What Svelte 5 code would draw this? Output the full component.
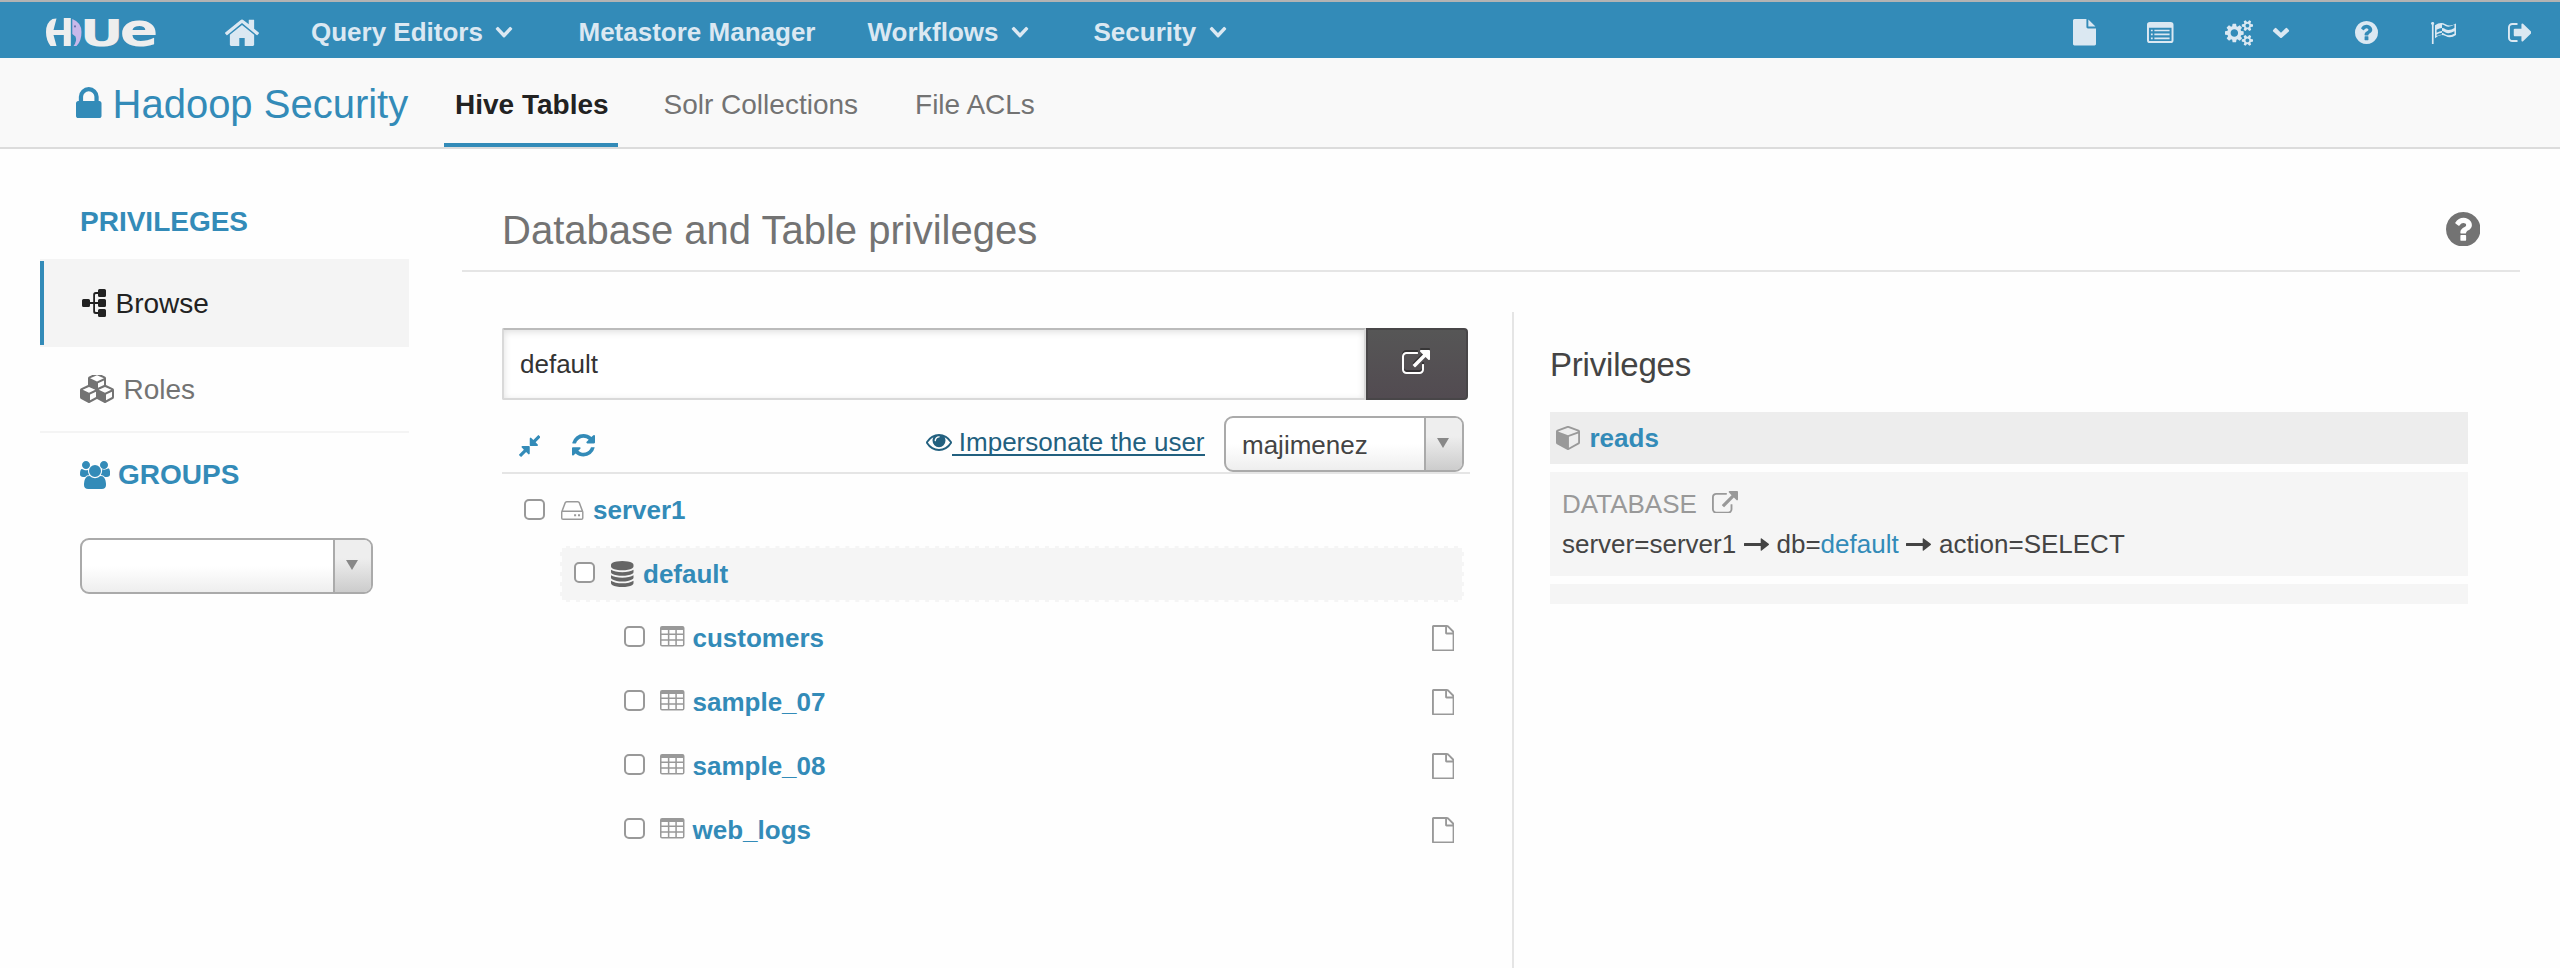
<script>
  const P = {
    home: { vb: '89 224 1614 1312', d: 'M1472 992v480q0 26-19 45t-45 19h-384v-384h-256v384h-384q-26 0-45-19t-19-45v-480q0-1 .5-3t.5-3l575-474 575 474q1 2 1 6zm223-69l-62 74q-8 9-21 11h-3q-13 0-21-7l-692-577-692 577q-12 8-24 7-13-2-21-11l-62-74q-8-10-7-23.5t11-21.5l719-599q32-26 76-26t76 26l244 204v-195q0-14 9-23t23-9h192q14 0 23 9t9 23v408l219 182q10 8 11 21.5t-7 23.5z' },
    file: { vb: '128 0 1536 1792', d: 'M1152 512v-472q22 14 36 28l408 408q14 14 28 36h-472zm-128 32q0 40 28 68t68 28h544v1056q0 40-28 68t-68 28h-1344q-40 0-68-28t-28-68v-1600q0-40 28-68t68-28h800v544z' },
    fileO: { vb: '128 0 1536 1792', d: 'M1596 380q28 28 48 76t20 88v1152q0 40-28 68t-68 28h-1344q-40 0-68-28t-28-68v-1600q0-40 28-68t68-28h896q40 0 88 20t76 48zm-444-244v376h376q-10-29-22-41l-313-313q-12-12-41-22zm384 1528v-1024h-416q-40 0-68-28t-28-68v-416h-768v1536h1280z' },
    listAlt: { vb: '0 0 27 22', d: 'M3 0h21a3 3 0 0 1 3 3v16a3 3 0 0 1-3 3H3a3 3 0 0 1-3-3V3a3 3 0 0 1 3-3zM2 6v13a1 1 0 0 0 1 1h21a1 1 0 0 0 1-1V6zM4 8h1.8v1.8H4zM4 12.1h1.8v1.8H4zM4 16.2h1.8V18H4zM7.5 8H23v1.8H7.5zM7.5 12.1H23v1.8H7.5zM7.5 16.2H23V18H7.5z' },
    cogs: { vb: '0 0 1920 1792', d: 'M896 896q0-106-75-181t-181-75-181 75-75 181 75 181 181 75 181-75 75-181zm768 512q0-52-38-90t-90-38-90 38-38 90q0 53 37.5 90.5t90.5 37.5 90.5-37.5 37.5-90.5zm0-1024q0-52-38-90t-90-38-90 38-38 90q0 53 37.5 90.5t90.5 37.5 90.5-37.5 37.5-90.5zm-384 421v185q0 10-7 19.5t-16 10.5l-155 24q-11 35-32 76 34 48 90 115 7 11 7 20 0 12-7 19-23 30-82.5 89.5t-78.5 59.5q-11 0-21-7l-115-90q-37 19-77 31-11 108-23 155-7 24-30 24h-186q-11 0-20-7.5t-10-17.5l-23-153q-34-10-75-31l-118 89q-7 7-20 7-11 0-21-8-144-133-144-160 0-9 7-19 10-14 41-53t47-61q-23-44-35-82l-152-24q-10-1-17-9.5t-7-19.5v-185q0-10 7-19.5t16-10.5l155-24q11-35 32-76-34-48-90-115-7-11-7-20 0-12 7-20 22-30 82-89t79-59q11 0 21 7l115 90q34-18 77-32 11-108 23-154 7-24 30-24h186q11 0 20 7.5t10 17.5l23 153q34 10 75 31l118-89q8-7 20-7 11 0 21 8 144 133 144 160 0 8-7 19-12 16-42 54t-45 60q23 48 34 82l152 23q10 2 17 10.5t7 19.5zm640 533v140q0 16-149 31-12 27-30 52 51 113 51 138 0 4-4 7-122 71-124 71-8 0-46-47t-52-68q-20 2-30 2t-30-2q-14 21-52 68t-46 47q-2 0-124-71-4-3-4-7 0-25 51-138-18-25-30-52-149-15-149-31v-140q0-16 149-31 13-29 30-52-51-113-51-138 0-4 4-7 4-2 35-20t59-34 30-16q8 0 46 46.5t52 67.5q20-2 30-2t30 2q51-71 92-112l6-2q4 0 124 70 4 3 4 7 0 25-51 138 17 23 30 52 149 15 149 31zm0-1024v140q0 16-149 31-12 27-30 52 51 113 51 138 0 4-4 7-122 71-124 71-8 0-46-47t-52-68q-20 2-30 2t-30-2q-14 21-52 68t-46 47q-2 0-124-71-4-3-4-7 0-25 51-138-18-25-30-52-149-15-149-31v-140q0-16 149-31 13-29 30-52-51-113-51-138 0-4 4-7 4-2 35-20t59-34 30-16q8 0 46 46.5t52 67.5q20-2 30-2t30 2q51-71 92-112l6-2q4 0 124 70 4 3 4 7 0 25-51 138 17 23 30 52 149 15 149 31z' },
    chevron: { vb: '0 0 18 11', d: 'M1.2 2.9L2.8 1.2Q3.6.5 4.4 1.2L9 5.8l4.6-4.6q.8-.7 1.6 0l1.6 1.7q.7.8 0 1.6l-7 6.2q-.8.6-1.6 0L1.2 4.5q-.7-.8 0-1.6z' },
    chevronThin: { vb: '0 0 18 14', d: 'M1 2.4L2 1.3Q2.8.6 3.6 1.3L9 7.9l5.4-6.6q.8-.7 1.6 0l1 1.1q.6.8 0 1.6l-7.2 8.6q-.8.8-1.6 0L1 4q-.6-.8 0-1.6z' },
    question: { vb: '128 128 1536 1536', d: 'M1024 1376v-192q0-14-9-23t-23-9h-192q-14 0-23 9t-9 23v192q0 14 9 23t23 9h192q14 0 23-9t9-23zm256-672q0-88-55.5-163t-138.5-116-170-41q-243 0-371 213-15 24 8 42l132 100q7 6 19 6 16 0 25-12 53-68 86-92 34-24 86-24 48 0 85.5 26t37.5 59q0 38-20 61t-68 45q-63 28-115.5 86.5t-52.5 125.5v36q0 14 9 23t23 9h192q14 0 23-9t9-23q0-19 21.5-49.5t54.5-49.5q32-18 49-28.5t46-35 44.5-48 28-60.5 12.5-81zm384 192q0 209-103 385.5t-279.5 279.5-385.5 103-385.5-103-279.5-279.5-103-385.5 103-385.5 279.5-279.5 385.5-103 385.5 103 279.5 279.5 103 385.5z' },
    flag: { vb: '0 0 25 22', d: 'M0 1.6a1.6 1.6 0 1 1 2.6 1.2V22H.9V2.8A1.6 1.6 0 0 1 0 1.6zM4 3.2Q9.5-.6 14.5 2.2T25 1.4V13Q19.5 17 14.5 14T4 16.2zM5.6 7.7Q8.5 6 11 6V9.1Q8.5 9.1 5.6 10.8zM5.6 14.1V12.4Q8.5 10.7 11 10.7V12.4Q8.5 12.4 5.6 14.1zM11 2.5Q13 2.7 14.5 4 16 4.8 17.5 4.7V8Q16 8.1 14.5 7.3 13 6 11 6zM11 9.1Q13 9.3 14.5 10.5 16 11.4 17.5 11.3V13.3Q16 13.5 14.5 12.5 13 11.4 11 10.7zM17.5 4.7Q20.5 4.3 23.4 2.8V5.9Q20.5 7.6 17.5 8zM17.5 11.3Q20.5 11 23.4 9.3V11.8Q20.5 13.3 17.5 13.3z' },
    signOut: { vb: '64 256 1568 1280', d: 'M704 1440q0 4 1 20t.5 26.5-3 23.5-10 19.5-20.5 6.5h-320q-119 0-203.5-84.5t-84.5-203.5v-704q0-119 84.5-203.5t203.5-84.5h320q13 0 22.5 9.5t9.5 22.5q0 4 1 20t.5 26.5-3 23.5-10 19.5-20.5 6.5h-320q-66 0-113 47t-47 113v704q0 66 47 113t113 47h312l11.5 1 11.5 3 8 5.5 7 9 2 13.5zm928-544q0 26-19 45l-544 544q-19 19-45 19t-45-19-19-45v-288h-448q-26 0-45-19t-19-45v-384q0-26 19-45t45-19h448v-288q0-26 19-45t45-19 45 19l544 544q19 19 19 45z' },
    lock: { vb: '320 128 1152 1408', d: 'M640 768h512v-192q0-106-75-181t-181-75-181 75-75 181v192zm832 96v576q0 40-28 68t-68 28h-960q-40 0-68-28t-28-68v-576q0-40 28-68t68-28h32v-192q0-184 132-316t316-132 316 132 132 316v192h32q40 0 68 28t28 68z' },
    sitemap: { vb: '0 0 24 28', d: 'M1.5 10h5A1.5 1.5 0 0 1 8 11.5V13h3.2V5.5Q11.2 3 13.7 3H16V1.5A1.5 1.5 0 0 1 17.5 0h5A1.5 1.5 0 0 1 24 1.5v5A1.5 1.5 0 0 1 22.5 8h-5A1.5 1.5 0 0 1 16 6.5V5h-2q-1 0-1 1v7h3v-1.5a1.5 1.5 0 0 1 1.5-1.5h5a1.5 1.5 0 0 1 1.5 1.5v5a1.5 1.5 0 0 1-1.5 1.5h-5a1.5 1.5 0 0 1-1.5-1.5V15h-3v7q0 1 1 1h2v-1.5a1.5 1.5 0 0 1 1.5-1.5h5a1.5 1.5 0 0 1 1.5 1.5v5a1.5 1.5 0 0 1-1.5 1.5h-5a1.5 1.5 0 0 1-1.5-1.5V25h-2.3q-2.500 0-2.500-2.500V15H8v1.500A1.500 1.500 0 0 1 6.500 18h-5A1.500 1.500 0 0 1 0 16.500v-5A1.500 1.500 0 0 1 1.500 10z' },
    cubes: { vb: '0 118 2176 1674', d: 'M640 1632l384-192v-314l-384 164v342zm-64-454l404-173-404-173-404 173zm1088 454l384-192v-314l-384 164v342zm-64-454l404-173-404-173-404 173zm-448-293l384-165v-266l-384 164v267zm-64-379l441-189-441-189-441 189zm1088 518v416q0 36-19 67t-52 47l-448 224q-25 14-57 14t-57-14l-448-224q-4-2-7-4-2 2-7 4l-448 224q-25 14-57 14t-57-14l-448-224q-33-16-52-47t-19-67v-416q0-38 21.5-70t56.5-48l434-186v-400q0-38 21.5-70t56.5-48l448-192q23-10 50-10t50 10l448 192q35 16 56.5 48t21.5 70v400l434 186q36 16 57 48t21 70z' },
    users: { vb: '0 0 1920 1792', d: 'M593 896q-162 5-265 128h-134q-82 0-138-40.5t-56-118.5q0-353 124-353 6 0 43.5 21t97.5 42.5 119 21.5q67 0 133-23-5 37-5 66 0 159 91 298zm1071 637q0 120-73 189.5t-194 69.5h-874q-121 0-194-69.5t-73-189.5q0-53 3.5-103.5t14-109 26.5-108.5 43-97.5 62-81 85.5-53.5 111.5-20q10 0 43 21.5t73 48 107 48 135 21.5 135-21.5 107-48 73-48 43-21.5q61 0 111.5 20t85.5 53.5 62 81 43 97.5 26.5 108.5 14 109 3.5 103.5zm-1024-1277q0 106-75 181t-181 75-181-75-75-181 75-181 181-75 181 75 75 181zm704 384q0 159-112.5 271.5t-271.5 112.5-271.5-112.5-112.5-271.5 112.5-271.5 271.5-112.5 271.5 112.5 112.5 271.5zm576 225q0 78-56 118.5t-138 40.5h-134q-103-123-265-128 91-139 91-298 0-29-5-66 66 23 133 23 59 0 119-21.5t97.5-42.5 43.5-21q124 0 124 353zm-128-609q0 106-75 181t-181 75-181-75-75-181 75-181 181-75 181 75 75 181z' },
    compress: { vb: '141 141 1510 1510', d: 'M896 960v448q0 26-19 45t-45 19-45-19l-144-144-332 332q-10 10-23 10t-23-10l-114-114q-10-10-10-23t10-23l332-332-144-144q-19-19-19-45t19-45 45-19h448q26 0 45 19t19 45zm755-672q0 13-10 23l-332 332 144 144q19 19 19 45t-19 45-45 19h-448q-26 0-45-19t-19-45v-448q0-26 19-45t45-19 45 19l144 144 332-332q10-10 23-10t23 10l114 114q10 10 10 23z' },
    refresh: { vb: '128 128 1536 1536', d: 'M1639 1056q0 5-1 7-64 268-268 434.5t-478 166.5q-146 0-282.5-55t-243.5-157l-129 129q-19 19-45 19t-45-19-19-45v-448q0-26 19-45t45-19h448q26 0 45 19t19 45-19 45l-137 137q71 66 161 102t187 36q134 0 250-65t186-179q11-17 53-117 8-23 30-23h192q13 0 22.5 9.5t9.5 22.5zm25-800v448q0 26-19 45t-45 19h-448q-26 0-45-19t-19-45 19-45l138-138q-148-137-349-137-134 0-250 65t-186 179q-11 17-53 117-8 23-30 23h-199q-13 0-22.5-9.5t-9.5-22.5v-7q65-268 270-434.5t480-166.5q146 0 284 55.5t245 156.5l130-129q19-19 45-19t45 19 19 45z' },
    eye: { vb: '0 384 1792 1152', d: 'M1664 960q-152-236-381-353 61 104 61 225 0 185-131.5 316.5t-316.5 131.5-316.5-131.5-131.5-316.5q0-121 61-225-229 117-381 353 133 205 333.5 326.5t434.5 121.5 434.5-121.5 333.5-326.5zm-720-384q0-20-14-34t-34-14q-125 0-214.5 89.5t-89.5 214.5q0 20 14 34t34 14 34-14 14-34q0-86 61-147t147-61q20 0 34-14t14-34zm848 384q0 34-20 69-140 230-376.5 368.5t-499.5 138.5-499.5-139-376.5-368q-20-35-20-69t20-69q140-229 376.5-368t499.5-139 499.5 139 376.5 368q20 35 20 69z' },
    external: { vb: '0 0 1792 1536', d: 'M1408 928v320q0 119-84.5 203.5t-203.5 84.5h-832q-119 0-203.5-84.5t-84.5-203.5v-832q0-119 84.5-203.5t203.5-84.5h704q14 0 23 9t9 23v64q0 14-9 23t-23 9h-704q-66 0-113 47t-47 113v832q0 66 47 113t113 47h832q66 0 113-47t47-113v-320q0-14 9-23t23-9h64q14 0 23 9t9 23zm384-864v512q0 26-19 45t-45 19-45-19l-176-176-652 652q-10 10-23 10t-23-10l-114-114q-10-10-10-23t10-23l652-652-176-176q-19-19-19-45t19-45 45-19h512q26 0 45 19t19 45z' },
    hdd: { vb: '0 0 22 19', d: 'M5.6 0h10.8q1.7 0 2.2 1.5l3.2 8.7q.2.5.2 1V17q0 2-2 2H2q-2 0-2-2v-5.8q0-.5.2-1l3.2-8.7Q3.9 0 5.6 0zM5.7 1.4q-.7 0-1 .8L2 9.6h18l-2.7-7.4q-.3-.8-1-.8zM1.4 11v6q0 .6.6.6h18q.6 0 .6-.6v-6zM12.8 13.3h2v2h-2zM16.6 13.3h2v2h-2z' },
    database: { vb: '128 0 1536 1792', d: 'M896 768q237 0 443-43t325-127v170q0 69-103 128t-280 93.5-385 34.5-385-34.5-280-93.5-103-128v-170q119 84 325 127t443 43zm0 768q237 0 443-43t325-127v170q0 69-103 128t-280 93.5-385 34.5-385-34.5-280-93.5-103-128v-170q119 84 325 127t443 43zm0-384q237 0 443-43t325-127v170q0 69-103 128t-280 93.5-385 34.5-385-34.5-280-93.5-103-128v-170q119 84 325 127t443 43zm0-1152q208 0 385 34.5t280 93.5 103 128v128q0 69-103 128t-280 93.5-385 34.5-385-34.5-280-93.5-103-128v-128q0-69 103-128t280-93.5 385-34.5z' },
    table: { vb: '0 0 24 21', d: 'M2 0h20a2 2 0 0 1 2 2v17a2 2 0 0 1-2 2H2a2 2 0 0 1-2-2V2a2 2 0 0 1 2-2zM1.5 4v3.7h6.2V4zM9.2 4v3.7h5.8V4zM16.5 4v3.7h6V4zM1.5 9.2V13.5h6.2V9.2zM9.2 9.2V13.5h5.8V9.2zM16.5 9.2V13.5h6V9.2zM1.5 15v4.4h6.2V15zM9.2 15v4.4h5.8V15zM16.5 15v4.4h6V15z' },
    cube: { vb: '0 128 1664 1664', d: 'M896 1629l640-349v-636l-640 233v752zm-64-865l698-254-698-254-698 254zm832-252v768q0 35-18 65t-49 47l-704 384q-28 16-61 16t-61-16l-704-384q-31-17-49-47t-18-65v-768q0-40 23-73t61-47l704-256q22-8 44-8t44 8l704 256q38 14 61 47t23 73z' },
    arrow: { vb: '0 0 25 13', d: 'M.5 5h16.2V1q0-1.3 1-.6l7 5.4q.6.6 0 1.3l-7 5.5q-1 .7-1-.6V8H.5Q0 8 0 7.5v-2Q0 5 .5 5z' }
  };

  const menus = [
    { label: 'Query Editors', width: 267.5, caret: true },
    { label: 'Metastore Manager', width: 289, caret: false },
    { label: 'Workflows', width: 226, caret: true },
    { label: 'Security', width: 140, caret: true }
  ];
  const tools = [
    { icon: P.file, w: 23, h: 26.5, gap: 0 },
    { icon: P.listAlt, w: 26.5, h: 21, gap: 51 },
    { icon: P.cogs, w: 28, h: 26, gap: 51.5 },
    { icon: P.chevron, w: 18, h: 11, gap: 19 },
    { icon: P.question, w: 23, h: 23, gap: 65 },
    { icon: P.flag, w: 25, h: 22, gap: 53 },
    { icon: P.signOut, w: 23.5, h: 19, gap: 51.5 }
  ];
  const tables = ['customers', 'sample_07', 'sample_08', 'web_logs'];
</script>

{#snippet icon(g, w, h)}
  <svg class="icon" width={w} height={h} viewBox={g.vb} preserveAspectRatio="none" aria-hidden="true">
    <path d={g.d} fill="currentColor" fill-rule="evenodd" />
  </svg>
{/snippet}

{#snippet picker(value)}
  <div class="picker">
    <span class="value">{value}</span>
    <span class="arrow"><i></i></span>
  </div>
{/snippet}

<div class="page">
  <header class="navbar">
    <svg class="logo" width="110" height="28" viewBox="0 0 110 28" aria-label="Hue">
      <g fill="#eee">
        <path d="M10.5.5L7.5 12H17.8V0H24.8V28H17.8V17H7.5L10.5 28H4.5Q0 22 0 14Q0 4.5 6.5 1Z" />
        <text class="mark" transform="translate(33.8 27.6) scale(1.48 1)" font-size="36.5">U</text>
        <text class="mark" transform="translate(73.8 27.5) scale(1.21 1)" font-size="47">e</text>
      </g>
      <path d="M26.3 1Q35.5 4.5 35.5 14T30.5 28H27.5Q31.3 23 29.5 18.5L26.3 16Z" fill="#c9b8ea" />
      <rect x="28" y="7.5" width="2" height="1.8" fill="#6f72ad" />
    </svg>
    <a class="home" href="#home" aria-label="Home">{@render icon(P.home, 34, 27)}</a>
    <nav class="menus">
      {#each menus as m}
        <span class="menu" style:width="{m.width}px">
          {m.label}
          {#if m.caret}{@render icon(P.chevronThin, 18, 12.5)}{/if}
        </span>
      {/each}
    </nav>
    <div class="tools">
      {#each tools as t}
        <span class="tool" style:margin-left="{t.gap}px">{@render icon(t.icon, t.w, t.h)}</span>
      {/each}
    </div>
  </header>

  <div class="subnav">
    <div class="app-title">{@render icon(P.lock, 25.5, 31)}<span>Hadoop Security</span></div>
    <div class="tab active">Hive Tables</div>
    <div class="tab">Solr Collections</div>
    <div class="tab">File ACLs</div>
  </div>

  <div class="body">
    <aside>
      <div class="side-head">PRIVILEGES</div>
      <div class="side-item current">{@render icon(P.sitemap, 24, 28)}<span>Browse</span></div>
      <div class="side-item">{@render icon(P.cubes, 34, 28)}<span>Roles</span></div>
      <div class="side-head groups">{@render icon(P.users, 30, 28)}<span>GROUPS</span></div>
      {@render picker('')}
    </aside>

    <main>
      <div class="title">
        <h1>Database and Table privileges</h1>
        {@render icon(P.question, 34.5, 34.5)}
      </div>
      <div class="columns">
        <section class="browser">
          <div class="path">
            <div class="path-input">default</div>
            <div class="path-go">{@render icon(P.external, 28, 24)}</div>
          </div>
          <div class="actions">
            <span class="blue compress">{@render icon(P.compress, 21.5, 22)}</span>
            <span class="blue refresh">{@render icon(P.refresh, 23, 22.5)}</span>
            <span class="impersonate">{@render icon(P.eye, 26, 17)}<span class="link">&nbsp;Impersonate the user</span></span>
            {@render picker('majimenez')}
          </div>
          <div class="row server">
            <i class="check"></i>{@render icon(P.hdd, 22.5, 19)}<b>server1</b>
          </div>
          <div class="row db">
            <i class="check"></i>{@render icon(P.database, 22.5, 26)}<b>default</b>
          </div>
          {#each tables as t}
            <div class="row table">
              <i class="check"></i>{@render icon(P.table, 24.5, 20.5)}<b>{t}</b>
              <span class="doc">{@render icon(P.fileO, 22.5, 26.5)}</span>
            </div>
          {/each}
        </section>

        <section class="details">
          <h2>Privileges</h2>
          <div class="role">{@render icon(P.cube, 24, 24)}<b>reads</b></div>
          <div class="privilege">
            <div class="scope">DATABASE{@render icon(P.external, 26, 22.5)}</div>
            <div class="rule">
              <span>server=server1</span>{@render icon(P.arrow, 25, 13)}<span>db=<a href="#default">default</a></span>{@render icon(P.arrow, 25, 13)}<span>action=SELECT</span>
            </div>
          </div>
          <div class="privilege empty"></div>
        </section>
      </div>
    </main>
  </div>
</div>

<style>
  :global(body) { margin: 0; background: #fff; }
  .page {
    width: 2560px;
    height: 968px;
    overflow: hidden;
    background: #fefefe;
    font-family: "Liberation Sans", Arial, sans-serif;
    font-size: 26px;
    color: #444;
  }
  .page, .page * { box-sizing: border-box; }
  .icon { display: block; flex: none; }
  span { white-space: nowrap; }
  a { color: inherit; text-decoration: none; }

  .navbar {
    display: flex;
    align-items: center;
    height: 58px;
    padding: 5px 29px 0 46px;
    border-top: 2px solid #b3b3b3;
    background: #338bb8;
    color: #dbe8f2;
    font-weight: bold;
  }
  .logo { display: block; flex: none; margin-top: -1px; overflow: visible; }
  .mark { font-family: "DejaVu Sans", sans-serif; font-weight: bold; }
  .home { margin-left: 69px; }
  .menus { display: flex; margin-left: 52px; }
  .menu { display: flex; align-items: center; gap: 12.5px; flex: none; line-height: 30px; margin-top: -1px; }
  .tools { display: flex; align-items: center; margin-left: auto; }

  .subnav {
    display: flex;
    height: 91px;
    padding-left: 76px;
    background: #f9f9f9;
    border-bottom: 2px solid #dcdcdc;
  }
  .app-title {
    display: flex;
    align-items: center;
    width: 368px;
    padding-top: 3px;
    font-size: 40px;
    color: #338bb8;
  }
  .app-title span { margin-left: 11px; }
  .app-title .icon { margin-top: -3px; }
  .tab {
    height: 89px;
    margin-right: 34px;
    padding: 5px 11.5px 0;
    border-bottom: 4px solid transparent;
    line-height: 84px;
    font-size: 28px;
    color: #737373;
    white-space: nowrap;
  }
  .tab.active { width: 174px; padding-left: 11px; border-color: #338bb8; font-weight: bold; color: #222; }

  .body { display: flex; height: 819px; }
  aside { width: 369px; margin-left: 40px; padding-top: 36px; font-size: 28px; flex: none; }
  .side-head {
    display: flex;
    align-items: center;
    height: 74px;
    padding-left: 40px;
    font-weight: bold;
    color: #338bb8;
  }
  .groups { height: 84px; margin-bottom: 21px; }
  .groups span { margin-left: 8px; }
  .side-item {
    display: flex;
    align-items: center;
    height: 86px;
    padding-left: 40px;
    border-bottom: 2px solid #f4f4f4;
    color: #737373;
  }
  .side-item span { margin-left: 9.5px; padding-top: 1px; }
  .side-item.current {
    height: 88px;
    padding-left: 42px;
    border: 0;
    background: linear-gradient(#338bb8, #338bb8) 0 2px / 4px 84px no-repeat #f4f4f4;
    color: #222;
  }

  .picker {
    display: flex;
    width: 293px;
    height: 56px;
    border: 2px solid #aaa;
    border-radius: 9px;
    overflow: hidden;
    background: linear-gradient(#fff 50%, #eee);
    line-height: 54px;
    flex: none;
  }
  aside .picker { margin-left: 40px; }
  .picker .value { flex: 1; padding-left: 16px; }
  .picker .arrow {
    display: flex;
    justify-content: center;
    align-items: center;
    width: 38px;
    border-left: 2px solid #aaa;
    background: linear-gradient(#eee 35%, #ccc);
  }
  .picker i {
    width: 0;
    border: 6px solid transparent;
    border-top: 10px solid #888;
    border-bottom: 0;
    margin: 0 2px 2px 0;
  }

  main { width: 2058px; margin-left: 53px; }
  .title {
    display: flex;
    align-items: center;
    height: 123px;
    padding: 39px 40px 0 40px;
    border-bottom: 2px solid #e5e5e5;
    color: #737373;
  }
  .title h1 { flex: 1; margin: 0; padding-top: 2px; font-size: 40px; font-weight: normal; line-height: 44px; }
  .columns { display: flex; padding: 40px 0 0 40px; }

  .browser { width: 1010px; padding-top: 16px; }
  .path { display: flex; width: 966px; height: 72px; }
  .path-input {
    flex: 1;
    border: 2px solid #d9d9d9;
    border-top-color: #bbb;
    box-shadow: inset 0 2px 7px rgba(0, 0, 0, .13);
    background: #fff;
    padding-left: 16px;
    line-height: 69px;
    color: #333;
    border-radius: 2px 0 0 2px;
  }
  .path-go {
    display: flex;
    align-items: center;
    justify-content: center;
    width: 102px;
    padding-right: 2px;
    border: 2px solid #484648;
    border-radius: 0 4px 4px 0;
    background: linear-gradient(#565656, #524b51);
    color: #fff;
  }
  .path-go .icon { filter: drop-shadow(0 -2px 0 rgba(0, 0, 0, .35)); margin-top: -4px; }
  .actions {
    display: flex;
    width: 968px;
    height: 74px;
    padding-top: 16px;
    border-bottom: 2px solid #e5e5e5;
  }
  .blue { color: #338bb8; }
  .compress { margin: 19px 0 0 16.5px; }
  .refresh { margin: 18px 0 0 31.5px; }
  .impersonate { display: flex; margin-left: auto; color: #22607f; height: 40px; line-height: 52px; }
  .impersonate .icon { margin-top: 18px; }
  .link { height: 40px; border-bottom: 2px solid #22607f; margin-right: 19.5px; }
  .actions .picker { width: 240px; margin-right: 6px; color: #444; }

  .row { display: flex; align-items: center; margin-right: 48px; color: #999; }
  .row b { color: #338bb8; margin-left: 9.5px; }
  .check {
    width: 21px;
    height: 21px;
    margin-right: 16px;
    border: 2px solid #999;
    border-radius: 5px;
    background: #fff;
    margin-top: -3px;
  }
  .server { height: 72px; margin-left: 22px; padding-top: 1px; }
  .db {
    height: 56px;
    margin-left: 58px;
    margin-bottom: 4px;
    padding-left: 12px;
    border: 2px dashed #fefefe;
    background: #f5f5f5;
    color: #666;
  }
  .table { height: 64px; margin-left: 122px; }
  .table .check { margin-right: 15px; }
  .table b { margin-left: 8px; }
  .table > .icon { margin-top: -3px; }
  .doc { margin-left: auto; margin-right: 10px; margin-top: 0; }

  .details { width: 958px; height: 656px; border-left: 2px solid #e5e5e5; padding: 35px 2px 0 36px; }
  h2 { margin: 0 0 29px; font-size: 33px; font-weight: normal; line-height: 36px; letter-spacing: -.2px; }
  .role {
    display: flex;
    align-items: center;
    height: 52px;
    padding-left: 6px;
    background: #ededed;
    color: #999;
  }
  .role b { margin-left: 9.5px; color: #338bb8; }
  .privilege { height: 104px; margin-top: 8px; padding: 12px 12px 0; background: #f5f5f5; }
  .privilege.empty { height: 20px; padding: 0; }
  .scope, .rule { display: flex; align-items: center; height: 40px; }
  .scope { color: #999; }
  .scope .icon { margin-left: 15px; margin-top: -4px; }
  .rule .icon { margin: 0 7.7px; }
  .rule a { color: #338bb8; }
</style>
